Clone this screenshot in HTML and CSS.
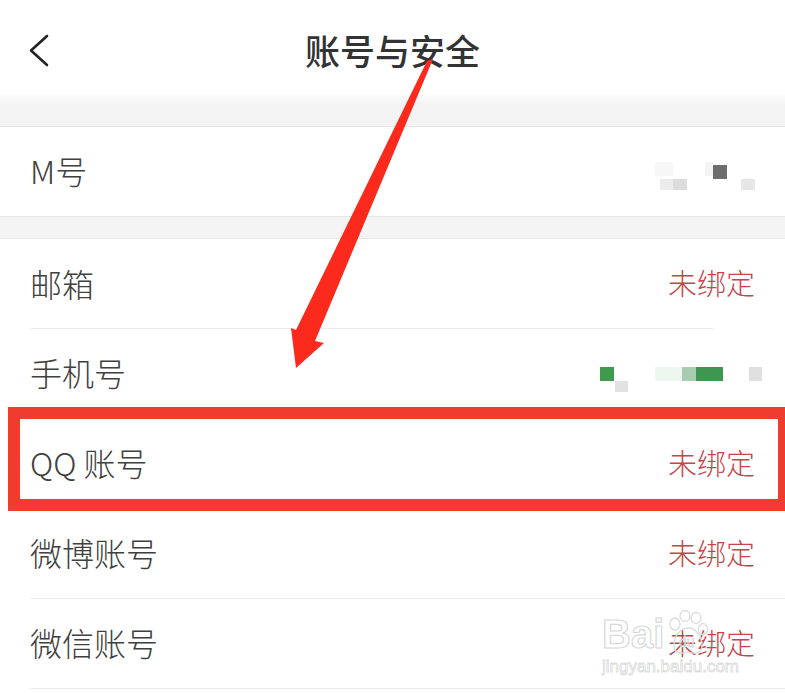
FILE: index.html
```html
<!DOCTYPE html>
<html lang="zh-CN">
<head>
<meta charset="utf-8">
<title>账号与安全</title>
<link rel="stylesheet" href="styles.css">
</head>
<body>
<div class="screen">
  <header class="topbar">
    <span class="back">
      <svg width="22" height="34" viewBox="0 0 22 34"><path d="M19 3 L3 17.5 L19 32" fill="none" stroke="#222" stroke-width="2.6" stroke-linecap="round" stroke-linejoin="round"/></svg>
    </span>
    <h1 class="title">账号与安全</h1>
  </header>

  <div class="gap gap-top"></div>

  <div class="row row-m">
    <div class="row-inner">
      <span class="label">M号</span>
      <svg class="blur blur-m" width="105" height="40" viewBox="0 0 105 40">
        <rect x="0" y="12" width="18" height="14" fill="#f7f7f7"/>
        <rect x="5" y="29" width="14" height="13" fill="#ececec"/>
        <rect x="18" y="29" width="14" height="13" fill="#dcdcdc"/>
        <rect x="50" y="12" width="8" height="14" fill="#f4f4f4"/>
        <rect x="58" y="15" width="14" height="14" fill="#6e6e6e"/>
        <rect x="86" y="29" width="14" height="13" fill="#e6e6e6"/>
      </svg>
    </div>
  </div>

  <div class="gap gap-mid"></div>

  <div class="group">
    <div class="row">
      <div class="row-inner short-line">
        <span class="label">邮箱</span>
        <span class="value">未绑定</span>
      </div>
    </div>
    <div class="row">
      <div class="row-inner">
        <span class="label">手机号</span>
        <svg class="blur blur-phone" width="170" height="40" viewBox="0 0 170 40">
          <rect x="5" y="15" width="14" height="14" fill="#3f9a4e"/>
          <rect x="20" y="29" width="13" height="13" fill="#e2e2e2"/>
          <rect x="60" y="15" width="27" height="14" fill="#eef7ef"/>
          <rect x="87" y="15" width="14" height="14" fill="#a8cdae"/>
          <rect x="101" y="15" width="27" height="14" fill="#3f9650"/>
          <rect x="154" y="15" width="13" height="14" fill="#e0e0e0"/>
        </svg>
      </div>
    </div>
    <div class="row">
      <div class="row-inner">
        <span class="label">QQ 账号</span>
        <span class="value">未绑定</span>
      </div>
    </div>
    <div class="row">
      <div class="row-inner">
        <span class="label">微博账号</span>
        <span class="value">未绑定</span>
      </div>
    </div>
    <div class="row">
      <div class="row-inner">
        <span class="label">微信账号</span>
        <span class="value">未绑定</span>
      </div>
    </div>
  </div>

  <div class="highlight"></div>

  <svg class="arrow" width="785" height="693" viewBox="0 0 785 693">
    <polygon points="427,61 433,59 315,341 324,343 296,368 291,328 296,330" fill="#fb2a1c"/>
  </svg>

  <div class="watermark">
    <div class="wm-brand">
      <span class="wm-bai">Bai</span>
      <svg class="wm-paw" width="42" height="46" viewBox="0 0 42 46">
        <g fill="none" stroke="#dcdcdc" stroke-width="1.3">
          <ellipse cx="9" cy="14" rx="5" ry="6"/>
          <ellipse cx="19" cy="6" rx="5" ry="5.5"/>
          <ellipse cx="30" cy="8" rx="5" ry="5.5"/>
          <ellipse cx="37" cy="19" rx="4.5" ry="5.5"/>
          <path d="M8 36 C8 24 16 18 22 18 C30 18 36 26 36 36 C36 44 28 44 22 42 C16 44 8 44 8 36 Z"/>
        </g>
        <text x="13" y="37" class="wm-du">du</text>
      </svg>
    </div>
    <div class="wm-site">jingyan.baidu.com</div>
  </div>
</div>
</body>
</html>
```

FILE: styles.css
```css
* {
  box-sizing: border-box;
}

html, body {
  margin: 0;
  padding: 0;
  background: #ffffff;
}

body {
  font-family: "Noto Sans CJK SC", "Noto Sans", "Liberation Sans", sans-serif;
  color: #3a3a3a;
}

.screen {
  position: relative;
  width: 785px;
  height: 693px;
  overflow: hidden;
  background: #ffffff;
}

.topbar {
  height: 95px;
  display: flex;
  align-items: center;
  justify-content: center;
  padding-top: 4px;
  position: relative;
}

.back {
  position: absolute;
  left: 28px;
  top: 33px;
  width: 22px;
  height: 34px;
}

.back svg {
  display: block;
}

.title {
  margin: 0;
  font-size: 35px;
  font-weight: 500;
  color: #333333;
  line-height: 1;
}

.gap {
  background: #f5f5f5;
}

.gap-top {
  height: 32px;
  background: linear-gradient(#fbfbfb 0px, #f3f3f3 10px, #f4f4f4 100%);
  border-bottom: 1px solid #e6e6e6;
}

.gap-mid {
  height: 23px;
  border-top: 1px solid #e6e6e6;
  border-bottom: 1px solid #e8e8e8;
  background: #f4f4f4;
}

.row {
  padding-left: 30px;
  background: #ffffff;
}

.row-inner {
  height: 90px;
  display: flex;
  align-items: center;
  justify-content: space-between;
  padding-right: 30px;
  padding-bottom: 3px;
  border-bottom: 1px solid #ededed;
}

.row-m .row-inner {
  height: 89px;
  border-bottom: none;
  padding-right: 25px;
}

.short-line {
  border-bottom: none;
  background: linear-gradient(#ededed, #ededed) no-repeat left bottom / 684px 1px;
}

.label {
  font-size: 32px;
  font-weight: 300;
  line-height: 1;
  color: #404040;
}

.value {
  font-size: 29px;
  font-weight: 300;
  line-height: 1;
  color: #c4454a;
}

.blur {
  display: block;
}

.blur-phone {
  margin-right: -10px;
}

.highlight {
  position: absolute;
  left: 8px;
  top: 407px;
  width: 782px;
  height: 104px;
  border: 12px solid #f03b2f;
}

.arrow {
  position: absolute;
  left: 0;
  top: 0;
  pointer-events: none;
}

.watermark {
  position: absolute;
  left: 602px;
  top: 606px;
  font-family: "Liberation Sans", Arial, sans-serif;
  pointer-events: none;
}

.wm-brand {
  display: flex;
  align-items: flex-end;
  height: 50px;
}

.wm-bai {
  font-size: 40px;
  font-weight: 700;
  line-height: 1;
  color: transparent;
  -webkit-text-stroke: 1.2px #d8d8d8;
  margin-bottom: 2px;
}

.wm-paw {
  display: block;
  margin-left: 2px;
}

.wm-du {
  font-family: "Liberation Sans", Arial, sans-serif;
  font-size: 14px;
  fill: none;
  stroke: #d8d8d8;
  stroke-width: 0.8;
}

.wm-site {
  font-size: 17px;
  line-height: 1;
  color: transparent;
  -webkit-text-stroke: 0.8px #dadada;
  margin-top: 2px;
}
```
